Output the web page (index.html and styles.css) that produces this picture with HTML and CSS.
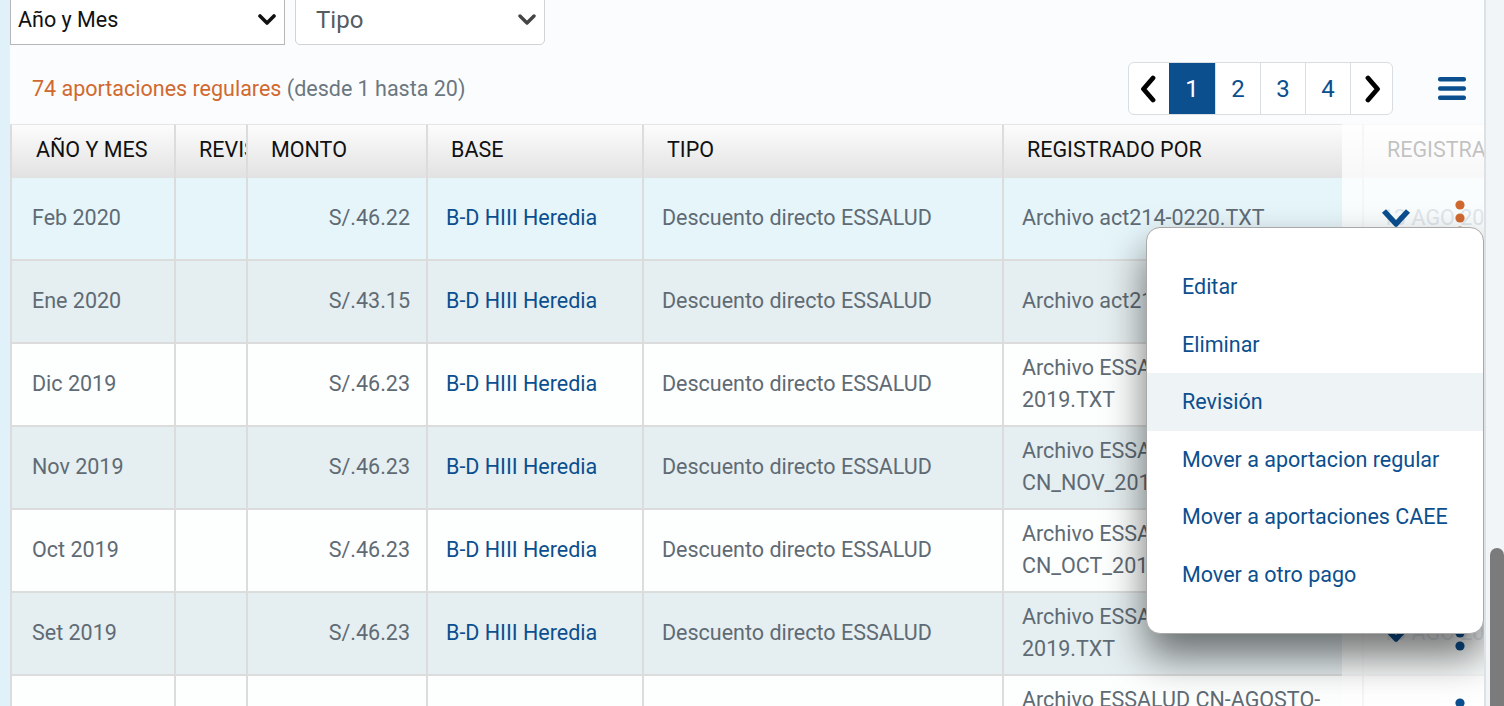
FILE: index.html
```html
<!DOCTYPE html>
<html lang="es">
<head>
<meta charset="utf-8">
<title>Aportaciones regulares</title>
<link rel="stylesheet" href="styles.css">
</head>
<body>
<div class="app">
  <div class="side-strip"></div>
  <main class="panel">
    <div class="filters">
      <div class="select select-square">
        <span>Año y Mes</span>
        <svg class="sel-chev" width="18" height="12" viewBox="0 0 18 12"><polyline points="2,2 9,9 16,2" fill="none" stroke="#111" stroke-width="3.6" stroke-linecap="round" stroke-linejoin="round"/></svg>
      </div>
      <div class="select select-round">
        <span>Tipo</span>
        <svg class="sel-chev" width="18" height="12" viewBox="0 0 18 12"><polyline points="2,2 9,9 16,2" fill="none" stroke="#444" stroke-width="3.4" stroke-linecap="round" stroke-linejoin="round"/></svg>
      </div>
    </div>

    <div class="toolbar">
      <p class="count"><span class="count-main">74 aportaciones regulares</span> <span class="count-range">(desde 1 hasta 20)</span></p>
      <nav class="pager">
        <span class="page-btn page-arrow"><svg width="18" height="28" viewBox="0 0 18 28"><polyline points="13,3 3.5,14 13,25" fill="none" stroke="#000" stroke-width="4.8" stroke-linecap="round" stroke-linejoin="round"/></svg></span>
        <span class="page-btn active">1</span>
        <span class="page-btn">2</span>
        <span class="page-btn">3</span>
        <span class="page-btn">4</span>
        <span class="page-btn page-arrow"><svg width="18" height="28" viewBox="0 0 18 28"><polyline points="5,3 14.5,14 5,25" fill="none" stroke="#000" stroke-width="4.8" stroke-linecap="round" stroke-linejoin="round"/></svg></span>
      </nav>
      <span class="menu-btn"><svg width="28" height="23" viewBox="0 0 28 23"><rect x="0" y="0" width="28" height="4.6" rx="2" fill="#0b4f8f"/><rect x="0" y="9.2" width="28" height="4.6" rx="2" fill="#0b4f8f"/><rect x="0" y="18.4" width="28" height="4.6" rx="2" fill="#0b4f8f"/></svg></span>
    </div>

    <div class="table-wrap">
      <table class="grid">
        <colgroup>
          <col class="c-fecha"><col class="c-rev"><col class="c-monto"><col class="c-base"><col class="c-tipo"><col class="c-reg"><col class="c-regel">
        </colgroup>
        <thead>
          <tr>
            <th>AÑO Y MES</th><th>REVISIÓN</th><th>MONTO</th><th>BASE</th><th>TIPO</th><th>REGISTRADO POR</th><th>REGISTRADO EL</th>
          </tr>
        </thead>
        <tbody>
          <tr class="row-active">
            <td>Feb 2020</td><td></td><td class="num">S/.46.22</td><td class="link">B-D HIII Heredia</td><td>Descuento directo ESSALUD</td><td>Archivo act214-0220.TXT</td><td class="date">13 AGO 2020</td>
          </tr>
          <tr class="row-alt">
            <td>Ene 2020</td><td></td><td class="num">S/.43.15</td><td class="link">B-D HIII Heredia</td><td>Descuento directo ESSALUD</td><td>Archivo act214-0120.TXT</td><td class="date">13 AGO 2020</td>
          </tr>
          <tr>
            <td>Dic 2019</td><td></td><td class="num">S/.46.23</td><td class="link">B-D HIII Heredia</td><td>Descuento directo ESSALUD</td><td>Archivo ESSALUD CN-DICIEM-2019.TXT</td><td class="date">13 AGO 2020</td>
          </tr>
          <tr class="row-alt">
            <td>Nov 2019</td><td></td><td class="num">S/.46.23</td><td class="link">B-D HIII Heredia</td><td>Descuento directo ESSALUD</td><td>Archivo ESSALUD CN_NOV_2019.TXT</td><td class="date">13 AGO 2020</td>
          </tr>
          <tr>
            <td>Oct 2019</td><td></td><td class="num">S/.46.23</td><td class="link">B-D HIII Heredia</td><td>Descuento directo ESSALUD</td><td>Archivo ESSALUD CN_OCT_2019.TXT</td><td class="date">13 AGO 2020</td>
          </tr>
          <tr class="row-alt">
            <td>Set 2019</td><td></td><td class="num">S/.46.23</td><td class="link">B-D HIII Heredia</td><td>Descuento directo ESSALUD</td><td>Archivo ESSALUD CN-SET-2019.TXT</td><td class="date">13 AGO 2020</td>
          </tr>
          <tr>
            <td>Ago 2019</td><td></td><td class="num">S/.46.23</td><td class="link">B-D HIII Heredia</td><td>Descuento directo ESSALUD</td><td>Archivo ESSALUD CN-AGOSTO-2019.TXT</td><td class="date">13 AGO 2020</td>
          </tr>
        </tbody>
      </table>

      <div class="actions-col">
        <div class="actions-head"></div>
        <div class="actions-row">
          <svg class="act-chev" width="30" height="20" viewBox="0 0 30 20"><polyline points="3,3 15,16 27,3" fill="none" stroke="#0b4f8f" stroke-width="5.5" stroke-linejoin="round"/></svg>
          <svg class="kebab" width="10" height="36" viewBox="0 0 10 36"><circle cx="5" cy="5" r="4.6" fill="#d0692f"/><circle cx="5" cy="18" r="4.6" fill="#d0692f"/><circle cx="5" cy="31" r="4.6" fill="#d0692f"/></svg>
        </div>
        <div class="actions-row">
          <svg class="act-chev" width="30" height="20" viewBox="0 0 30 20"><polyline points="3,3 15,16 27,3" fill="none" stroke="#0b4f8f" stroke-width="5.5" stroke-linejoin="round"/></svg>
          <svg class="kebab" width="10" height="36" viewBox="0 0 10 36"><circle cx="5" cy="5" r="4.6" fill="#0b4f8f"/><circle cx="5" cy="18" r="4.6" fill="#0b4f8f"/><circle cx="5" cy="31" r="4.6" fill="#0b4f8f"/></svg>
        </div>
        <div class="actions-row">
          <svg class="act-chev" width="30" height="20" viewBox="0 0 30 20"><polyline points="3,3 15,16 27,3" fill="none" stroke="#0b4f8f" stroke-width="5.5" stroke-linejoin="round"/></svg>
          <svg class="kebab" width="10" height="36" viewBox="0 0 10 36"><circle cx="5" cy="5" r="4.6" fill="#0b4f8f"/><circle cx="5" cy="18" r="4.6" fill="#0b4f8f"/><circle cx="5" cy="31" r="4.6" fill="#0b4f8f"/></svg>
        </div>
        <div class="actions-row">
          <svg class="act-chev" width="30" height="20" viewBox="0 0 30 20"><polyline points="3,3 15,16 27,3" fill="none" stroke="#0b4f8f" stroke-width="5.5" stroke-linejoin="round"/></svg>
          <svg class="kebab" width="10" height="36" viewBox="0 0 10 36"><circle cx="5" cy="5" r="4.6" fill="#0b4f8f"/><circle cx="5" cy="18" r="4.6" fill="#0b4f8f"/><circle cx="5" cy="31" r="4.6" fill="#0b4f8f"/></svg>
        </div>
        <div class="actions-row">
          <svg class="act-chev" width="30" height="20" viewBox="0 0 30 20"><polyline points="3,3 15,16 27,3" fill="none" stroke="#0b4f8f" stroke-width="5.5" stroke-linejoin="round"/></svg>
          <svg class="kebab" width="10" height="36" viewBox="0 0 10 36"><circle cx="5" cy="5" r="4.6" fill="#0b4f8f"/><circle cx="5" cy="18" r="4.6" fill="#0b4f8f"/><circle cx="5" cy="31" r="4.6" fill="#0b4f8f"/></svg>
        </div>
        <div class="actions-row">
          <svg class="act-chev" width="30" height="20" viewBox="0 0 30 20"><polyline points="3,3 15,16 27,3" fill="none" stroke="#0b4f8f" stroke-width="5.5" stroke-linejoin="round"/></svg>
          <svg class="kebab" width="10" height="36" viewBox="0 0 10 36"><circle cx="5" cy="5" r="4.6" fill="#0b4f8f"/><circle cx="5" cy="18" r="4.6" fill="#0b4f8f"/><circle cx="5" cy="31" r="4.6" fill="#0b4f8f"/></svg>
        </div>
        <div class="actions-row">
          <svg class="act-chev" width="30" height="20" viewBox="0 0 30 20"><polyline points="3,3 15,16 27,3" fill="none" stroke="#0b4f8f" stroke-width="5.5" stroke-linejoin="round"/></svg>
          <svg class="kebab" width="10" height="36" viewBox="0 0 10 36"><circle cx="5" cy="5" r="4.6" fill="#0b4f8f"/><circle cx="5" cy="18" r="4.6" fill="#0b4f8f"/><circle cx="5" cy="31" r="4.6" fill="#0b4f8f"/></svg>
        </div>
      </div>

      <ul class="popover">
        <li>Editar</li>
        <li>Eliminar</li>
        <li class="hover">Revisión</li>
        <li>Mover a aportacion regular</li>
        <li>Mover a aportaciones CAEE</li>
        <li>Mover a otro pago</li>
      </ul>
    </div>
  </main>
  <div class="scroll-track"><div class="scroll-thumb"></div></div>
</div>
</body>
</html>
```

FILE: styles.css
```css
* { box-sizing: border-box; }
html, body { margin: 0; height: 100%; }
body {
  font-family: Roboto, "Liberation Sans", Arial, sans-serif;
  background: #f2f5f8;
  color: #5f6b74;
  overflow: hidden;
}
.app { display: flex; height: 706px; overflow: hidden; }
.side-strip { flex: 0 0 10px; background: #e0f1f9; }
.panel {
  flex: 0 0 1476px;
  background: #fbfcfd;
  border-right: 2px solid #dde1e4;
  display: flex;
  flex-direction: column;
  min-width: 0;
}

/* filters */
.filters { display: flex; gap: 10px; margin-top: -6px; flex: 0 0 auto; }
.select {
  height: 51px;
  display: flex;
  align-items: center;
  justify-content: space-between;
  background: #fff;
}
.select-square {
  width: 275px;
  border: 1.5px solid #b7b7b7;
  padding: 0 8px 0 7px;
  font-size: 21.5px;
  color: #111;
}
.select-round {
  width: 250px;
  border: 1.5px solid #cfd3d6;
  border-radius: 5px;
  padding: 0 8px 0 20px;
  font-size: 24px;
  color: #555c62;
}
.sel-chev { display: block; }

/* toolbar */
.toolbar {
  flex: 0 0 79px;
  display: flex;
  align-items: center;
  padding: 17px 18px 9px 22px;
}
.count { margin: 0; font-size: 21.5px; }
.count-main { color: #d0692f; }
.count-range { color: #6b7780; }
.pager {
  margin-left: auto;
  display: flex;
  height: 53px;
  border: 1px solid #d9dee2;
  border-radius: 6px;
  overflow: hidden;
  background: #fff;
}
.page-btn {
  width: 45px;
  display: flex;
  align-items: center;
  justify-content: center;
  border-left: 1px solid #d9dee2;
  font-size: 24px;
  color: #0b4f8f;
}
.page-btn:first-child { border-left: 0; width: 40px; }
.page-btn:last-child { width: 42px; }
.page-btn.active { background: #0b4f8f; color: #fff; width: 46px; border-left: 0; }
.menu-btn { margin-left: 45px; display: flex; }

/* table */
.table-wrap {
  flex: 1 1 auto;
  position: relative;
  overflow: hidden;
}
.grid {
  border-collapse: separate;
  border-spacing: 0;
  table-layout: fixed;
  width: 1554px;
  font-size: 21.5px;
}
.c-fecha { width: 166px; }
.c-rev { width: 72px; }
.c-monto { width: 180px; }
.c-base { width: 216px; }
.c-tipo { width: 360px; }
.c-reg { width: 360px; }
.c-regel { width: 200px; }

.grid th {
  height: 54px;
  padding: 0 8px 5px 23px;
  text-align: left;
  font-weight: 400;
  color: #111;
  white-space: nowrap;
  overflow: hidden;
  text-overflow: clip;
  background: linear-gradient(#fcfcfc, #e2e2e2);
  border-top: 1px solid #e6e6e6;
  border-right: 2px solid #dcdcdc;
  border-bottom: 0;
}
.grid th:first-child { padding-left: 24px; border-left: 2px solid #dcdcdc; }
.grid td {
  height: 83px;
  padding: 0 20px 2px 18px;
  vertical-align: middle;
  line-height: 32px;
  color: #5f6b74;
  background: #fdfefe;
  border-right: 2px solid #dcdcdc;
  border-bottom: 2px solid #dcdcdc;
}
.grid td:first-child { border-left: 2px solid #dcdcdc; padding-left: 20px; }
.grid td.num { text-align: right; padding-right: 16px; }
.grid td.link { color: #0b4f8f; }
.grid td.date { color: #8aa0b3; white-space: nowrap; overflow: hidden; }
.grid tr.row-active td { background: #e6f5fa; }
.grid tr.row-alt td { background: #e5eef0; }

/* sticky actions column */
.actions-col {
  position: absolute;
  top: 0;
  right: 0;
  bottom: 0;
  width: 142px;
  background: rgba(255, 255, 255, 0.74);
  display: flex;
  flex-direction: column;
}
.actions-head { flex: 0 0 54px; }
.actions-row {
  flex: 0 0 83px;
  display: flex;
  align-items: center;
  padding: 0 19px 4px 39px;
}
.act-chev { display: block; }
.kebab { display: block; margin-left: auto; }

/* popover menu */
.popover {
  position: absolute;
  top: 103px;
  right: 0;
  width: 338px;
  margin: 0;
  padding: 30px 0 30px;
  list-style: none;
  background: #fff;
  border: 1.5px solid #a9a9a9;
  border-radius: 14px;
  box-shadow: 0 22px 40px rgba(0, 0, 0, 0.55);
  z-index: 2;
}
.popover li {
  height: 57.5px;
  display: flex;
  align-items: center;
  padding-left: 35px;
  font-size: 21.5px;
  color: #0b4f8f;
}
.popover li.hover { background: #eef3f5; }

/* page scrollbar */
.scroll-track {
  flex: 1 1 auto;
  position: relative;
  background: #f2f5f8;
}
.scroll-thumb {
  position: absolute;
  top: 548px;
  left: 4px;
  right: 0;
  height: 200px;
  background: #7b7b7b;
  border-radius: 7px 7px 0 0;
}
```
